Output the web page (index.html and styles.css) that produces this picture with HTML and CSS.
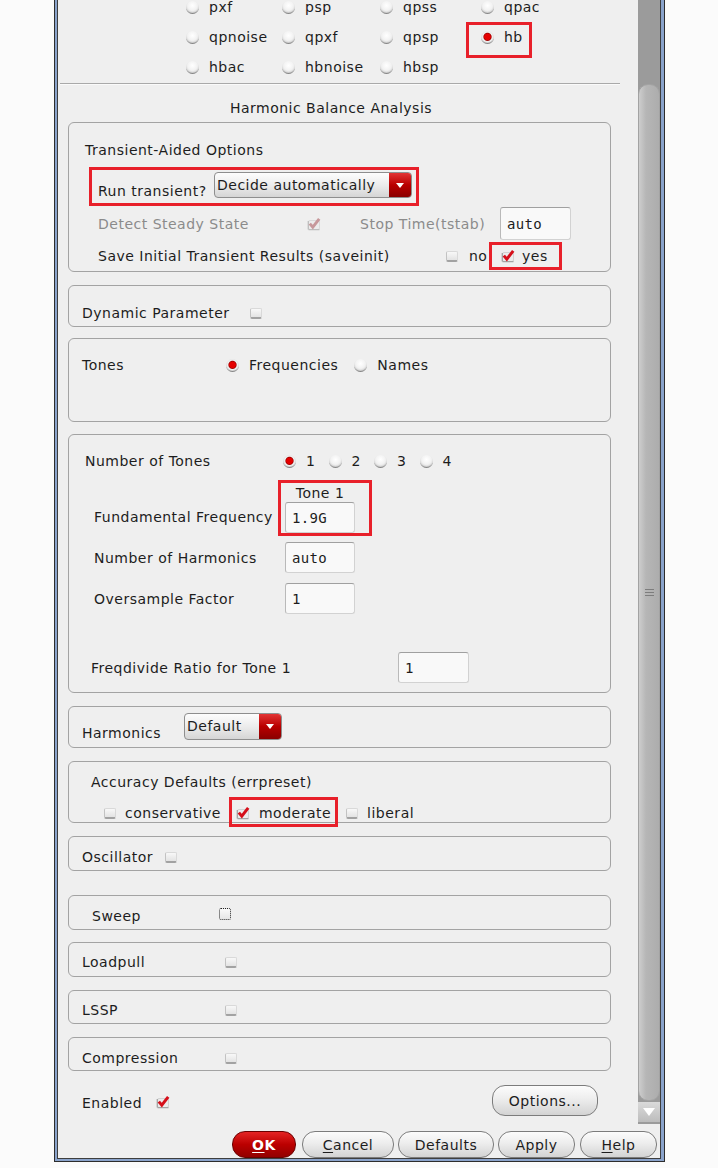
FILE: index.html
```html
<!DOCTYPE html>
<html>
<head>
<meta charset="utf-8">
<title>Harmonic Balance Analysis</title>
<link rel="stylesheet" href="styles.css">
</head>
<body>
<div class="window">
  <div class="client">
    <div class="scroll-area">
      <div class="panel">
        <div class="radio-grid">
          <span class="ri"><span class="rb"></span>pxf</span>
          <span class="ri"><span class="rb"></span>psp</span>
          <span class="ri"><span class="rb"></span>qpss</span>
          <span class="ri"><span class="rb"></span>qpac</span>
          <span class="ri"><span class="rb"></span>qpnoise</span>
          <span class="ri"><span class="rb"></span>qpxf</span>
          <span class="ri"><span class="rb"></span>qpsp</span>
          <span class="ri hl-hb"><span class="rb on"></span>hb</span>
          <span class="ri"><span class="rb"></span>hbac</span>
          <span class="ri"><span class="rb"></span>hbnoise</span>
          <span class="ri"><span class="rb"></span>hbsp</span>
        </div>
        <div class="sep"></div>
        <div class="title">Harmonic Balance Analysis</div>

        <div class="group g-trans">
          <div class="g-title">Transient-Aided Options</div>
          <div class="run-row">
            <span class="run-label">Run transient?</span>
            <div class="dd dd-run"><span class="dd-text">Decide automatically</span><span class="dd-btn"></span></div>
          </div>
          <div class="detect-row">
            <span class="dis w-detect">Detect Steady State</span>
            <svg class="ck" viewBox="0 0 14 14"><rect x="1.5" y="3.5" width="11" height="9" rx="1.5" fill="#ececec" stroke="#dadada"/><path d="M1.5 12.7h11M1.3 4v8.5" stroke="#bdbdbd" stroke-width="1.3"/><path d="M2.8 6.6l3 3.6 6.4-8.4" fill="none" stroke="#c7989b" stroke-width="2.9"/></svg>
            <span class="dis w-stop">Stop Time(tstab)</span>
            <span class="inp inp-stop">auto</span>
          </div>
          <div class="save-row">
            <span class="w-save">Save Initial Transient Results (saveinit)</span>
            <span class="cb"></span>
            <span class="opt-no">no</span>
            <span class="yes-box">
              <svg class="ck" viewBox="0 0 14 14"><rect x="1.5" y="3.5" width="11" height="9" rx="1.5" fill="#ececec" stroke="#d2d2d2"/><path d="M1.5 12.7h11M1.3 4v8.5" stroke="#a4a4a4" stroke-width="1.3"/><path d="M2.8 6.6l3 3.6 6.4-8.4" fill="none" stroke="#d50f1a" stroke-width="3"/></svg>
              <span>yes</span>
            </span>
          </div>
        </div>

        <div class="group g-dyn">
          <div class="grow gap20"><span>Dynamic Parameter</span><span class="cb"></span></div>
        </div>

        <div class="group g-tones">
          <div class="grow">
            <span class="w-tones">Tones</span>
            <span class="ri2"><span class="rb on"></span>Frequencies</span>
            <span class="ri2 ml16"><span class="rb"></span>Names</span>
          </div>
        </div>

        <div class="group g-num">
          <div class="grow">
            <span class="w-num">Number of Tones</span>
            <span class="ri3"><span class="rb on"></span>1</span>
            <span class="ri3"><span class="rb"></span>2</span>
            <span class="ri3"><span class="rb"></span>3</span>
            <span class="ri3"><span class="rb"></span>4</span>
          </div>
          <div class="tone-grid">
            <span class="tone-hd">Tone 1</span>
            <span class="hl-tone"></span>
            <span class="tl tl-ff">Fundamental Frequency</span>
            <span class="inp ti ti-ff">1.9G</span>
            <span class="tl tl-nh">Number of Harmonics</span>
            <span class="inp ti ti-nh">auto</span>
            <span class="tl tl-of">Oversample Factor</span>
            <span class="inp ti ti-of">1</span>
          </div>
          <div class="grow freq-row">
            <span class="w-freq">Freqdivide Ratio for Tone 1</span>
            <span class="inp inp-freq">1</span>
          </div>
        </div>

        <div class="group g-harm">
          <div class="grow harm-row">
            <span class="w-harm">Harmonics</span>
            <div class="dd dd-harm"><span class="dd-text">Default</span><span class="dd-btn"></span></div>
          </div>
        </div>

        <div class="group g-acc">
          <div class="acc-title">Accuracy Defaults (errpreset)</div>
          <div class="grow acc-row">
            <span class="cb"></span><span class="acc-lbl">conservative</span>
            <span class="acc-mod">
              <svg class="ck" viewBox="0 0 14 14"><rect x="1.5" y="3.5" width="11" height="9" rx="1.5" fill="#ececec" stroke="#d2d2d2"/><path d="M1.5 12.7h11M1.3 4v8.5" stroke="#a4a4a4" stroke-width="1.3"/><path d="M2.8 6.6l3 3.6 6.4-8.4" fill="none" stroke="#d50f1a" stroke-width="3"/></svg>
              <span>moderate</span>
            </span>
            <span class="cb ml15"></span><span class="acc-lbl">liberal</span>
          </div>
        </div>

        <div class="group g-osc">
          <div class="grow gap12"><span>Oscillator</span><span class="cb"></span></div>
        </div>

        <div class="group g-sweep">
          <div class="grow"><span class="w-sweep">Sweep</span><span class="cb-focus"></span></div>
        </div>

        <div class="group g-small g-load">
          <div class="grow"><span class="w-small">Loadpull</span><span class="cb"></span></div>
        </div>

        <div class="group g-small g-lssp">
          <div class="grow"><span class="w-small">LSSP</span><span class="cb"></span></div>
        </div>

        <div class="group g-small g-comp">
          <div class="grow"><span class="w-small">Compression</span><span class="cb"></span></div>
        </div>

        <div class="enabled-row">
          <span class="en-lbl">Enabled</span>
          <svg class="ck en-ck" viewBox="0 0 14 14"><rect x="1.5" y="3.5" width="11" height="9" rx="1.5" fill="#ececec" stroke="#d2d2d2"/><path d="M1.5 12.7h11M1.3 4v8.5" stroke="#a4a4a4" stroke-width="1.3"/><path d="M2.8 6.6l3 3.6 6.4-8.4" fill="none" stroke="#d50f1a" stroke-width="3"/></svg>
          <span class="btn btn-options">Options...</span>
        </div>
      </div>

      <div class="scrollbar">
        <div class="sb-top"></div>
        <div class="thumb"><span class="grip"></span></div>
        <div class="sb-down"></div>
      </div>
    </div>

    <div class="button-bar">
      <span class="btn ok"><u>O</u>K</span>
      <span class="btn b-cancel"><u>C</u>ancel</span>
      <span class="btn b-defaults">Defaults</span>
      <span class="btn b-apply">Apply</span>
      <span class="btn b-help"><u>H</u>elp</span>
    </div>
  </div>
</div>
</body>
</html>
```

FILE: styles.css
```css
* { box-sizing: border-box; }
html, body { margin: 0; }
body {
  background: #fbfbfb;
  font-family: "DejaVu Sans", "Noto Sans", sans-serif;
  font-size: 14px;
  line-height: 18px;
  letter-spacing: 0.5px;
  color: #1d1d1d;
}

/* window frame */
.window {
  margin-left: 54px;
  width: 611px;
  border: 1px solid #2d2d2d;
  border-top: 0;
  background: #8aa3cb;
  padding: 0 3px 2px 2px;
}
.client {
  border: 1px solid #3e3e3e;
  border-top: 0;
  background: #efefef;
  height: 1159px;
  display: flex;
  flex-direction: column;
}
.scroll-area { display: flex; height: 1124px; flex: none; }
.panel { width: 580px; flex: none; overflow: hidden; }

/* scrollbar */
.scrollbar { width: 22px; flex: none; background: #9b9b9b; display: flex; flex-direction: column; }
.sb-top { height: 84px; flex: none; }
.thumb {
  height: 1017px; flex: none;
  border-radius: 10px;
  background: linear-gradient(90deg, #cdcdcd, #b6b6b6 35%, #adadad);
  border: 1px solid #a3a3a3;
  display: flex; align-items: center; justify-content: center;
}
.grip { width: 9px; height: 8px; background: repeating-linear-gradient(#7d7d7d 0 1px, transparent 1px 3px); }
.sb-down {
  height: 20px; margin-top: 1px; flex: none;
  background: linear-gradient(#dadada, #bcbcbc);
  display: flex; align-items: center; justify-content: center;
}
.sb-down::before {
  content: "";
  border-left: 6px solid transparent;
  border-right: 6px solid transparent;
  border-top: 8px solid #ffffff;
}

/* radios */
.radio-grid {
  display: grid;
  grid-template-columns: 96px 98px 101px 60px;
  grid-auto-rows: 30px;
  margin-top: -8px;
  padding-left: 128px;
}
.ri, .ri2, .ri3 { display: flex; align-items: center; gap: 10px; }
.ri { position: relative; }
.hl-hb::after {
  content: "";
  position: absolute;
  left: -15px; top: 0; width: 60px; height: 30px;
  border: 3px solid #e8202a;
}
.rb {
  width: 13px; height: 13px; flex: none;
  border-radius: 50%;
  background: radial-gradient(circle at 50% 35%, #ffffff 0, #f2f2f2 45%, #d4d4d4 72%);
  box-shadow: inset 0 -2px 1px -1px #7e7e7e;
}
.rb.on {
  background: radial-gradient(circle at 50% 45%, #e40000 0 3px, #a00000 3.6px, #f2f2f2 4.6px, #d4d4d4 75%);
}
.ml16 { margin-left: 16px; }
.ml15 { margin-left: 15px; }

.sep { margin: 1px 0 0 2px; width: 560px; height: 2px; border-top: 1px solid #a9a9a9; border-bottom: 1px solid #fafafa; }
.title { margin-top: 14px; width: 546px; text-align: center; }

/* groups */
.group {
  margin-left: 10px;
  width: 543px;
  border: 1px solid #a3a3a3;
  border-radius: 6px;
}
.grow { display: flex; align-items: center; }
.gap20 { gap: 20px; }
.gap12 { gap: 12px; }

.g-trans { margin-top: 5px; height: 150px; padding-top: 18px; }
.g-title { padding-left: 16px; }
.run-row {
  margin: 8px 0 0 20px;
  width: 330px; height: 39px;
  border: 3px solid #e8202a;
  display: flex; align-items: flex-start;
}
.run-label { width: 122px; padding-left: 6px; margin-top: 12px; flex: none; }
.dd {
  display: flex;
  border: 1px solid #8e8e8e;
  border-radius: 4px;
  background: linear-gradient(#fdfdfd, #ececec 50%, #d5d5d5);
  overflow: hidden;
  flex: none;
}
.dd-run { width: 198px; height: 26px; margin-top: 2px; }
.dd-text { flex: 1; padding-left: 2px; line-height: 24px; }
.dd-btn {
  width: 22px; flex: none;
  background: linear-gradient(#e23434, #b90000 50%, #8a0000);
  display: flex; align-items: center; justify-content: center;
}
.dd-btn::before {
  content: "";
  border-left: 4px solid transparent;
  border-right: 4px solid transparent;
  border-top: 5px solid #ffffff;
}
.detect-row { display: flex; align-items: center; margin-top: 1px; height: 33px; padding-left: 29px; }
.dis { color: #8b8b8b; }
.w-detect { width: 209px; flex: none; }
.ck { width: 14px; height: 14px; flex: none; display: block; }
.w-stop { width: 140px; margin-left: 39px; flex: none; }
.inp {
  display: flex; align-items: center;
  height: 31px; padding-left: 6px;
  background: #f9f9f9;
  border: 1px solid #d2d2d2;
  border-top-color: #a0a0a0;
  border-left-color: #b9b9b9;
  border-radius: 3px;
  font-family: "DejaVu Sans Mono", monospace;
  font-size: 14px;
  letter-spacing: 0.3px;
  flex: none;
}
.inp-stop { width: 71px; height: 33px; }
.save-row { display: flex; align-items: center; margin-top: 2px; height: 28px; padding-left: 29px; }
.w-save { width: 348px; flex: none; }
.cb {
  width: 12px; height: 11px; flex: none;
  border-radius: 2px;
  background: linear-gradient(#f8f8f8, #e3e3e3);
  border: 1px solid #d9d9d9;
  border-left-color: #c2c2c2;
  border-bottom: 2px solid #a2a2a2;
}
.opt-no { margin-left: 11px; width: 20px; }
.yes-box {
  display: flex; align-items: center; gap: 7px;
  width: 73px; height: 28px;
  border: 3px solid #e8202a;
  padding-left: 9px;
}

.g-dyn { margin-top: 13px; height: 42px; padding: 18px 0 0 13px; }
.g-tones { margin-top: 11px; height: 84px; padding: 17px 0 0 13px; }
.w-tones { width: 144px; flex: none; }

.g-num { margin-top: 12px; height: 259px; padding: 17px 0 0 16px; }
.w-num { width: 198px; flex: none; }
.ri3 { width: 45.5px; flex: none; }
.tone-grid {
  display: grid;
  grid-template-columns: 191px 70px;
  grid-template-rows: 18px 31px 40px 41px;
  margin: 14px 0 0 9px;
}
.tone-hd { grid-column: 2; grid-row: 1; text-align: center; }
.hl-tone {
  grid-column: 2; grid-row: 1 / 3;
  margin: -4px -17px -3px -7px;
  border: 3px solid #e8202a;
}
.tl { grid-column: 1; align-self: start; }
.tl-ff { grid-row: 2; margin-top: 6px; }
.tl-nh { grid-row: 3; margin-top: 16px; }
.tl-of { grid-row: 4; margin-top: 17px; }
.ti { grid-column: 2; align-self: start; width: 70px; }
.ti-ff { grid-row: 2; }
.ti-nh { grid-row: 3; margin-top: 9px; }
.ti-of { grid-row: 4; margin-top: 10px; }
.freq-row { margin: 38px 0 0 6px; }
.w-freq { width: 307px; flex: none; }
.inp-freq { width: 71px; }

.g-harm { margin-top: 13px; height: 42px; padding-left: 13px; }
.harm-row { align-items: flex-start; }
.w-harm { width: 102px; flex: none; margin-top: 17px; }
.dd-harm { width: 98px; height: 27px; margin-top: 6px; }
.dd-harm .dd-text { line-height: 25px; }

.g-acc { margin-top: 13px; height: 62px; padding: 11px 0 0 22px; }
.acc-row { margin: 13px 0 0 13px; }
.acc-lbl { margin-left: 9px; }
.acc-mod {
  position: relative;
  display: flex; align-items: center; gap: 9px;
  margin-left: 15px;
}
.acc-mod::after {
  content: "";
  position: absolute;
  left: -7px; right: -7px; top: -7px; bottom: -5px;
  border: 3px solid #e8202a;
}

.g-osc { margin-top: 13px; height: 35px; padding: 11px 0 0 13px; }
.g-sweep { margin-top: 24px; height: 35px; padding: 11px 0 0 23px; }
.w-sweep { width: 127px; flex: none; }
.cb-focus {
  width: 12px; height: 12px; flex: none;
  border: 1px dotted #222;
  border-radius: 2px;
  background: linear-gradient(#fafafa, #e6e6e6);
  margin-top: -4px;
}
.g-small { padding-left: 13px; }
.w-small { width: 143px; flex: none; }
.g-load { margin-top: 12px; height: 35px; padding-top: 10px; }
.g-lssp { margin-top: 13px; height: 34px; padding-top: 10px; }
.g-comp { margin-top: 13px; height: 34px; padding-top: 11px; }

.enabled-row {
  display: flex; align-items: center;
  margin: 14px 40px 0 24px;
  height: 31px;
}
.en-lbl { margin-top: 4px; }
.en-ck { margin-left: 14px; margin-top: 2px; }

/* buttons */
.btn {
  display: flex; align-items: center; justify-content: center;
  height: 27px;
  border: 1px solid #7c7c7c;
  border-radius: 13px;
  background: linear-gradient(#fcfcfc, #ededed 45%, #d3d3d3);
  color: #1d1d1d;
  flex: none;
}
.btn u { text-decoration-thickness: 1px; text-underline-offset: 2px; }
.btn-options { margin-left: auto; width: 106px; height: 31px; border-radius: 13px; }
.button-bar {
  flex: none;
  height: 35px;
  display: flex; justify-content: flex-end; align-items: flex-start;
  gap: 4px;
  padding: 7px 3px 0 0;
}
.ok {
  width: 64px; margin-right: 2px;
  background: linear-gradient(#e42424, #bb0000 50%, #920000);
  border-color: #6a0000;
  color: #ffffff;
  font-weight: bold;
}
.b-cancel { width: 92px; }
.b-defaults { width: 96px; }
.b-apply { width: 77px; }
.b-help { width: 77px; margin-left: 1px; }
```
